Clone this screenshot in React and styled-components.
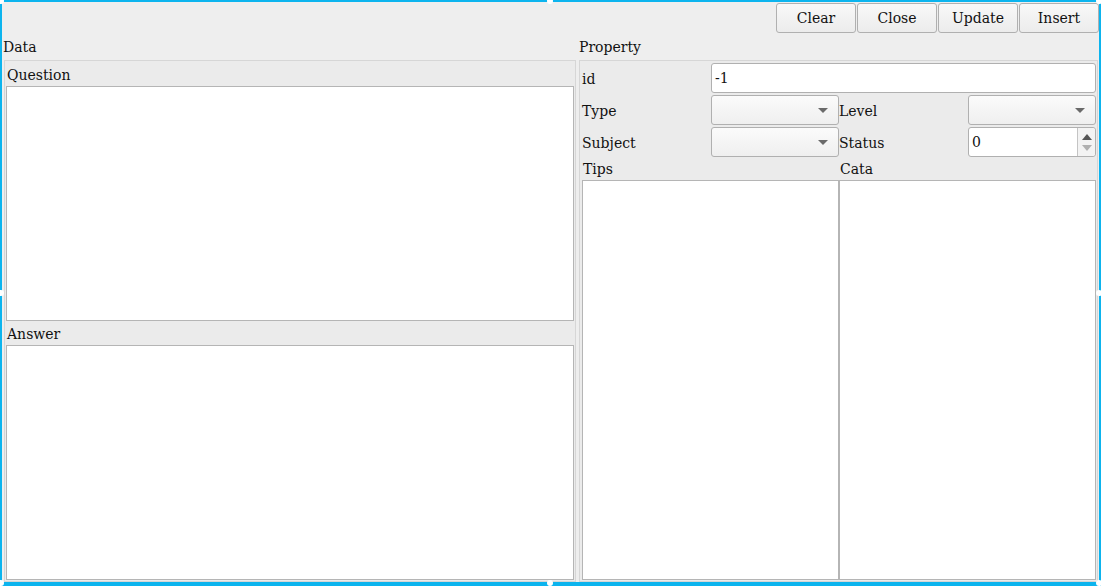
import React from 'react';
import styled, { createGlobalStyle } from 'styled-components';

const Global = createGlobalStyle`
html, body {
    margin: 0;
    padding: 0;
    background: #eeeeee;
}
* {
    box-sizing: border-box;
}
`

const Frame = styled.div`
position: relative;
width: 1101px;
height: 586px;
background: #eeeeee;
border-style: solid;
border-color: #0cb4ee;
border-width: 2px 2px 4px 2px;
font-family: "DejaVu Serif", serif;
font-size: 14px;
color: #111;
display: flex;
flex-direction: column;
`

const Handle = styled.span`
position: absolute;
width: 6px;
height: 6px;
border-radius: 50%;
background: #fff;
left: ${p => p.x}px;
top: ${p => p.y}px;
`

const Toolbar = styled.div`
display: flex;
justify-content: flex-end;
gap: 1px;
padding: 1px 0 0 0;
height: 31px;
`

const Button = styled.button`
width: 80px;
height: 30px;
border: 1px solid #b0b0b0;
border-radius: 3px;
background: linear-gradient(#f8f8f8, #ececec);
font-family: "DejaVu Serif", serif;
font-size: 14px;
color: #111;
padding: 0;
`

const Columns = styled.div`
flex: 1;
display: grid;
grid-template-columns: 574px 519px;
gap: 3px;
min-height: 0;
`

const Column = styled.div`
display: flex;
flex-direction: column;
min-height: 0;
`

const Caption = styled.div`
height: 27px;
padding: 6px 0 0 ${p => p.indent || 0}px;
line-height: 16px;
`

const Group = styled.div`
flex: 1;
margin-left: ${p => p.indent || 0}px;
border: 1px solid #d6d6d6;
background: #ebebeb;
display: flex;
flex-direction: column;
padding: 1px;
min-height: 0;
`

const FieldLabel = styled.div`
height: ${p => p.h || 24}px;
padding: ${p => (p.h || 24) - 19}px 0 0 1px;
line-height: 16px;
`

const TextBox = styled.div`
flex: 1;
background: #fff;
border: 1px solid #b5b5b5;
`

const Form = styled.div`
display: grid;
grid-template-columns: 129px 128px 129px 128px;
grid-auto-rows: 30px;
row-gap: 2px;
padding: 1px 0 0 1px;
`

const RowLabel = styled.div`
display: flex;
align-items: center;
padding-top: 1px;
`

const LineEdit = styled.div`
grid-column: ${p => p.span || 'auto'};
background: #fff;
border: 1px solid #b0b0b0;
border-radius: 3px;
display: flex;
align-items: center;
padding-left: 3px;
position: relative;
`

const Combo = styled.div`
border: 1px solid #b0b0b0;
border-radius: 3px;
background: linear-gradient(#fbfbfb, #efefef);
display: flex;
align-items: center;
justify-content: flex-end;
padding-right: 10px;
`

const Arrow = styled.span`
width: 0;
height: 0;
border-left: 5px solid transparent;
border-right: 5px solid transparent;
border-top: 5px solid #6a6a6a;
`

const SpinButtons = styled.div`
position: absolute;
right: 0;
top: 0;
bottom: 0;
width: 18px;
border-left: 1px solid #c4c4c4;
background: #f3f3f3;
border-radius: 0 3px 3px 0;
display: flex;
flex-direction: column;
align-items: center;
justify-content: center;
gap: 5px;
`

const SpinArrow = styled.span`
width: 0;
height: 0;
border-left: 5px solid transparent;
border-right: 5px solid transparent;
${p => p.up
    ? `border-bottom: 6px solid #555;`
    : `border-top: 6px solid #b0b0b0;`}
`

const Panes = styled.div`
flex: 1;
display: grid;
grid-template-columns: 257px 257px;
padding-left: 1px;
min-height: 0;
`

const Pane = styled.div`
display: flex;
flex-direction: column;
min-height: 0;
`

const App = () => {
    const handles = [
        [-4, -4], [545, -4], [1094, -4],
        [-4, 288], [1094, 288],
        [-4, 578], [545, 578], [1094, 578],
    ]

    return (
        <>
            <Global />
            <Frame>
                <Toolbar>
                    <Button>Clear</Button>
                    <Button>Close</Button>
                    <Button>Update</Button>
                    <Button>Insert</Button>
                </Toolbar>
                <Columns>
                    <Column>
                        <Caption indent={1}>Data</Caption>
                        <Group indent={2}>
                            <FieldLabel>Question</FieldLabel>
                            <TextBox />
                            <FieldLabel>Answer</FieldLabel>
                            <TextBox />
                        </Group>
                    </Column>
                    <Column>
                        <Caption>Property</Caption>
                        <Group>
                            <Form>
                                <RowLabel>id</RowLabel>
                                <LineEdit span="2 / 5">-1</LineEdit>
                                <RowLabel>Type</RowLabel>
                                <Combo><Arrow /></Combo>
                                <RowLabel>Level</RowLabel>
                                <Combo><Arrow /></Combo>
                                <RowLabel>Subject</RowLabel>
                                <Combo><Arrow /></Combo>
                                <RowLabel>Status</RowLabel>
                                <LineEdit>
                                    0
                                    <SpinButtons>
                                        <SpinArrow up />
                                        <SpinArrow />
                                    </SpinButtons>
                                </LineEdit>
                            </Form>
                            <Panes>
                                <Pane>
                                    <FieldLabel h={23}>Tips</FieldLabel>
                                    <TextBox />
                                </Pane>
                                <Pane>
                                    <FieldLabel h={23}>Cata</FieldLabel>
                                    <TextBox />
                                </Pane>
                            </Panes>
                        </Group>
                    </Column>
                </Columns>
                {handles.map(([x, y]) => <Handle key={x + '-' + y} x={x} y={y} />)}
            </Frame>
        </>
    );
};

export default App;
